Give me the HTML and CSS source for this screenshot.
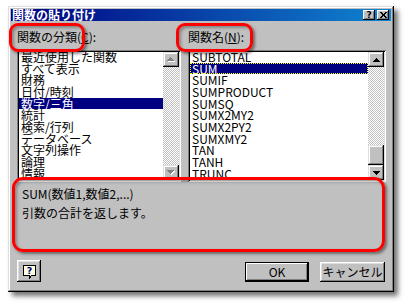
FILE: index.html
```html
<!DOCTYPE html>
<html lang="ja">
<head>
<meta charset="utf-8">
<title>関数の貼り付け</title>
<link rel="stylesheet" href="styles.css">
</head>
<body>
<div class="window">
  <div class="titlebar">
    <span class="title">関数の貼り付け</span>
    <div class="caption-btns">
      <span class="cbtn">?</span>
      <span class="cbtn"><svg width="7" height="6" viewBox="0 0 7 6" shape-rendering="crispEdges"><path d="M0 0h2v1h1v1h1V1h1V0h2v1H6v1H5v2h1v1h1v1H5V5H4V4H3v1H2v1H0V5h1V4h1V2H1V1H0z" fill="#000"/></svg></span>
    </div>
  </div>
  <div class="content">
    <div class="lists">
      <div class="col">
        <div class="label">関数の分類(<u>C</u>):</div>
        <div class="listbox">
          <ul class="items">
            <li>最近使用した関数</li>
            <li>すべて表示</li>
            <li>財務</li>
            <li>日付/時刻</li>
            <li class="sel">数字/三角</li>
            <li>統計</li>
            <li>検索/行列</li>
            <li>データベース</li>
            <li>文字列操作</li>
            <li>論理</li>
            <li>情報</li>
          </ul>
          <div class="scrollbar">
            <div class="sbtn"><svg width="8" height="5" viewBox="0 0 8 5" shape-rendering="crispEdges"><path d="M4 1h1v1h1v1h1v1h1v1H1V4h1V3h1V2h1z" fill="#fff"/><path d="M3 0h1v1h1v1h1v1h1v1H0V3h1V2h1V1h1z" fill="#808080"/></svg></div>
            <div class="track"></div>
            <div class="sbtn"><svg width="8" height="5" viewBox="0 0 8 5" shape-rendering="crispEdges"><path d="M1 1h7v1H7v1H6v1H5v1H4V4H3V3H2V2H1z" fill="#fff"/><path d="M0 0h7v1H6v1H5v1H4v1H3V3H2V2H1V1H0z" fill="#808080"/></svg></div>
          </div>
        </div>
      </div>
      <div class="col">
        <div class="label">関数名(<u>N</u>):</div>
        <div class="listbox">
          <ul class="items">
            <li>SUBTOTAL</li>
            <li class="sel focus">SUM</li>
            <li>SUMIF</li>
            <li>SUMPRODUCT</li>
            <li>SUMSQ</li>
            <li>SUMX2MY2</li>
            <li>SUMX2PY2</li>
            <li>SUMXMY2</li>
            <li>TAN</li>
            <li>TANH</li>
            <li>TRUNC</li>
          </ul>
          <div class="scrollbar">
            <div class="sbtn"><svg width="7" height="4" viewBox="0 0 7 4" shape-rendering="crispEdges"><path d="M3 0h1v1h1v1h1v1h1v1H0V3h1V2h1V1h1z" fill="#000"/></svg></div>
            <div class="track"></div>
            <div class="thumb"></div>
            <div class="sbtn"><svg width="7" height="4" viewBox="0 0 7 4" shape-rendering="crispEdges"><path d="M0 0h7v1H6v1H5v1H4v1H3V3H2V2H1V1H0z" fill="#000"/></svg></div>
          </div>
        </div>
      </div>
    </div>
    <div class="desc">
      <p>SUM(数値1,数値2,...)</p>
      <p>引数の合計を返します。</p>
    </div>
    <div class="buttons">
      <button class="btn helpbtn" type="button"><svg width="14" height="14" viewBox="0 0 14 14"><path d="M0.5 0.5h12v10h-4l-2 2.5v-2.5h-6z" fill="#ffffe0" stroke="#000" shape-rendering="crispEdges"/><text x="6.5" y="9" text-anchor="middle" font-family="DejaVu Sans, sans-serif" font-size="9.5" font-weight="bold" fill="#000080">?</text></svg></button>
      <span class="spacer"></span>
      <button class="btn default" type="button">OK</button>
      <button class="btn" type="button">キャンセル</button>
    </div>
  </div>
</div>
<div class="mark mark-cat"></div>
<div class="mark mark-name"></div>
<div class="mark mark-desc"></div>
</body>
</html>
```
FILE: styles.css
```css
html, body {
  margin: 0;
  padding: 0;
  background: #fff;
}
body {
  width: 408px;
  height: 304px;
  overflow: hidden;
  font-family: "Noto Sans CJK JP", "Noto Sans", sans-serif;
  font-size: 12px;
  color: #000;
}
.window {
  margin: 6px 0 0 8px;
  width: 386px;
  height: 286px;
  box-sizing: border-box;
  padding: 3px;
  background: #c0c0c0;
  box-shadow: inset -1px -1px #000, inset 1px 1px #dfdfdf, inset -2px -2px #808080, inset 2px 2px #fff, 4px 4px 5px rgba(0,0,0,0.55);
  display: flex;
  flex-direction: column;
}
.titlebar {
  height: 12px;
  flex: none;
  display: flex;
  align-items: center;
  justify-content: space-between;
  padding: 0 2px 0 1px;
  background: linear-gradient(to right, #000080, #1084d0);
  color: #fff;
  font-weight: bold;
  line-height: 12px;
}
.title {
  white-space: nowrap;
}
.caption-btns {
  display: flex;
  gap: 2px;
}
.cbtn {
  width: 12px;
  height: 10px;
  box-sizing: border-box;
  display: flex;
  align-items: center;
  justify-content: center;
  background: #c0c0c0;
  color: #000;
  font: bold 9px/10px "DejaVu Sans", sans-serif;
  box-shadow: inset -1px -1px #000, inset 1px 1px #fff, inset -2px -2px #808080;
}
.content {
  flex: 1;
  padding: 9px 5px 7px 6px;
  display: flex;
  flex-direction: column;
}
.lists {
  display: grid;
  grid-template-columns: 164px 198px;
  column-gap: 7px;
}
.label {
  height: 14px;
  line-height: 14px;
  margin-bottom: 6px;
  white-space: nowrap;
}
.label u {
  text-decoration: underline;
  text-underline-offset: 1px;
}
.listbox {
  height: 132px;
  box-sizing: border-box;
  padding: 2px;
  background: #fff;
  display: flex;
  box-shadow: inset 1px 1px #808080, inset -1px -1px #fff, inset 2px 2px #000, inset -2px -2px #dfdfdf;
}
.items {
  flex: 1;
  margin: 0;
  padding: 0;
  list-style: none;
  overflow: hidden;
}
.items li {
  height: 11.67px;
  line-height: 11.67px;
  padding-left: 2px;
  white-space: nowrap;
}
.items li:first-child {
  margin-top: -1px;
}
.items li.sel {
  background: #000080;
  color: #fff;
}
.items li.focus {
  outline: 1px dotted #ffff00;
  outline-offset: -1px;
}
.scrollbar {
  width: 16px;
  flex: none;
  display: flex;
  flex-direction: column;
}
.sbtn, .thumb {
  flex: none;
  background: #c0c0c0;
  box-shadow: inset -1px -1px #000, inset 1px 1px #dfdfdf, inset -2px -2px #808080, inset 2px 2px #fff;
}
.sbtn {
  height: 15px;
  display: flex;
  align-items: center;
  justify-content: center;
}
.sbtn svg {
  display: block;
}
.thumb {
  height: 20px;
}
.track {
  flex: 1;
  background: repeating-conic-gradient(#c0c0c0 0 25%, #fff 0 50%) 0 0 / 2px 2px;
}
.desc {
  margin-top: 2px;
  height: 76px;
  padding-left: 5px;
  box-sizing: border-box;
}
.desc p {
  margin: 0;
  line-height: 19px;
  white-space: nowrap;
}
.buttons {
  display: flex;
  align-items: flex-end;
  gap: 11px;
  height: 22px;
  padding-right: 1px;
}
.spacer {
  flex: 1;
}
.btn {
  margin: 0;
  border: none;
  padding: 0;
  height: 20px;
  width: 64px;
  background: #c0c0c0;
  font-family: "Noto Sans CJK JP", "Noto Sans", sans-serif;
  font-size: 12px;
  color: #000;
  line-height: 20px;
  box-shadow: inset -1px -1px #000, inset 1px 1px #fff, inset -2px -2px #808080, inset 2px 2px #dfdfdf;
}
.btn + .btn {
  width: 65px;
}
.btn.default {
  box-shadow: inset 0 0 0 1px #000, inset -2px -2px #000, inset 2px 2px #fff, inset -3px -3px #808080;
}
.helpbtn {
  width: 24px;
  height: 22px;
  display: flex;
  align-items: center;
  justify-content: center;
  padding: 1px 0 0 1px;
}
.helpbtn svg {
  display: block;
}
.mark {
  position: absolute;
  box-sizing: border-box;
  border: 3px solid #ff0000;
  border-radius: 9px;
  box-shadow: 2px 2px 3px rgba(0,0,0,0.45), inset 2px 2px 3px rgba(0,0,0,0.3);
  pointer-events: none;
}
.mark-cat {
  left: 9px;
  top: 23px;
  width: 76px;
  height: 29px;
}
.mark-name {
  left: 176px;
  top: 23px;
  width: 77px;
  height: 29px;
}
.mark-desc {
  left: 12px;
  top: 177px;
  width: 373px;
  height: 75px;
  border-radius: 11px;
}
```
